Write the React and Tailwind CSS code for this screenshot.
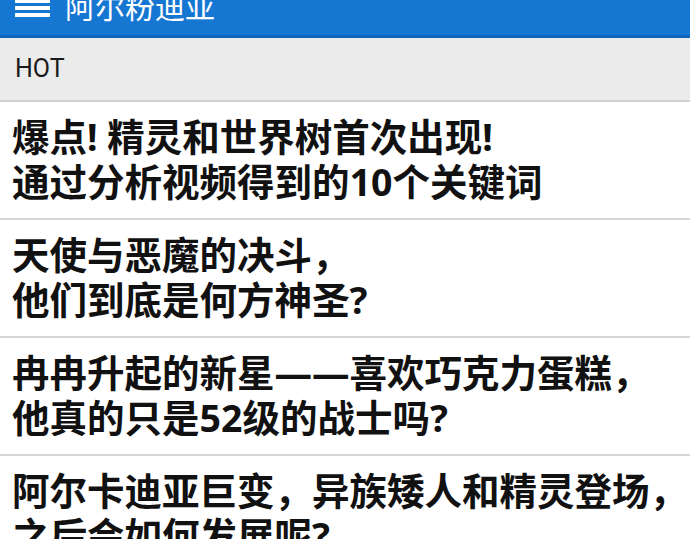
import React from "react";

const items = [
    ["爆点! 精灵和世界树首次出现!", "通过分析视频得到的10个关键词"],
    ["天使与恶魔的决斗，", "他们到底是何方神圣?"],
    ["冉冉升起的新星——喜欢巧克力蛋糕，", "他真的只是52级的战士吗?"],
    ["阿尔卡迪亚巨变，异族矮人和精灵登场，", "之后会如何发展呢?"],
];

export default function App() {
    return (
        <div
            className="w-[690px] h-[539px] overflow-hidden bg-white"
            style={{ fontFamily: '"Noto Sans", "Noto Sans CJK SC", sans-serif' }}
        >
            {/* Top app bar, cut off at the top */}
            <div className="h-[38px] bg-[#1677d2] border-b-[3px] border-[#0f63b8] overflow-hidden flex items-start">
                <div className="flex flex-col gap-[3px] ml-[15px] mt-[-1px] w-[35px]">
                    <span className="h-[4px] bg-white" />
                    <span className="h-[4px] bg-white" />
                    <span className="h-[4px] bg-white" />
                </div>
                <span className="ml-[15px] mt-[-8px] text-[30px] leading-[30px] text-white">阿尔粉迪亚</span>
            </div>

            {/* Section header */}
            <div className="h-[64px] bg-[#ebebeb] border-b-2 border-[#d2d2d2] flex items-center px-[15px]">
                <span className="text-[25px] text-[#1a1a1a]" style={{ fontFamily: '"Roboto", sans-serif' }}>HOT</span>
            </div>

            {/* Article list */}
            <ul>
                {items.map((lines, i) => (
                    <li key={i} className="border-b-2 border-[#d6d6d6] pl-[12px] pt-[12px] pb-[14px]">
                        <p className="text-[37.5px] leading-[45px] font-bold text-[#111] whitespace-nowrap">
                            {lines[0]}
                            <br />
                            {lines[1]}
                        </p>
                    </li>
                ))}
            </ul>
        </div>
    );
}
